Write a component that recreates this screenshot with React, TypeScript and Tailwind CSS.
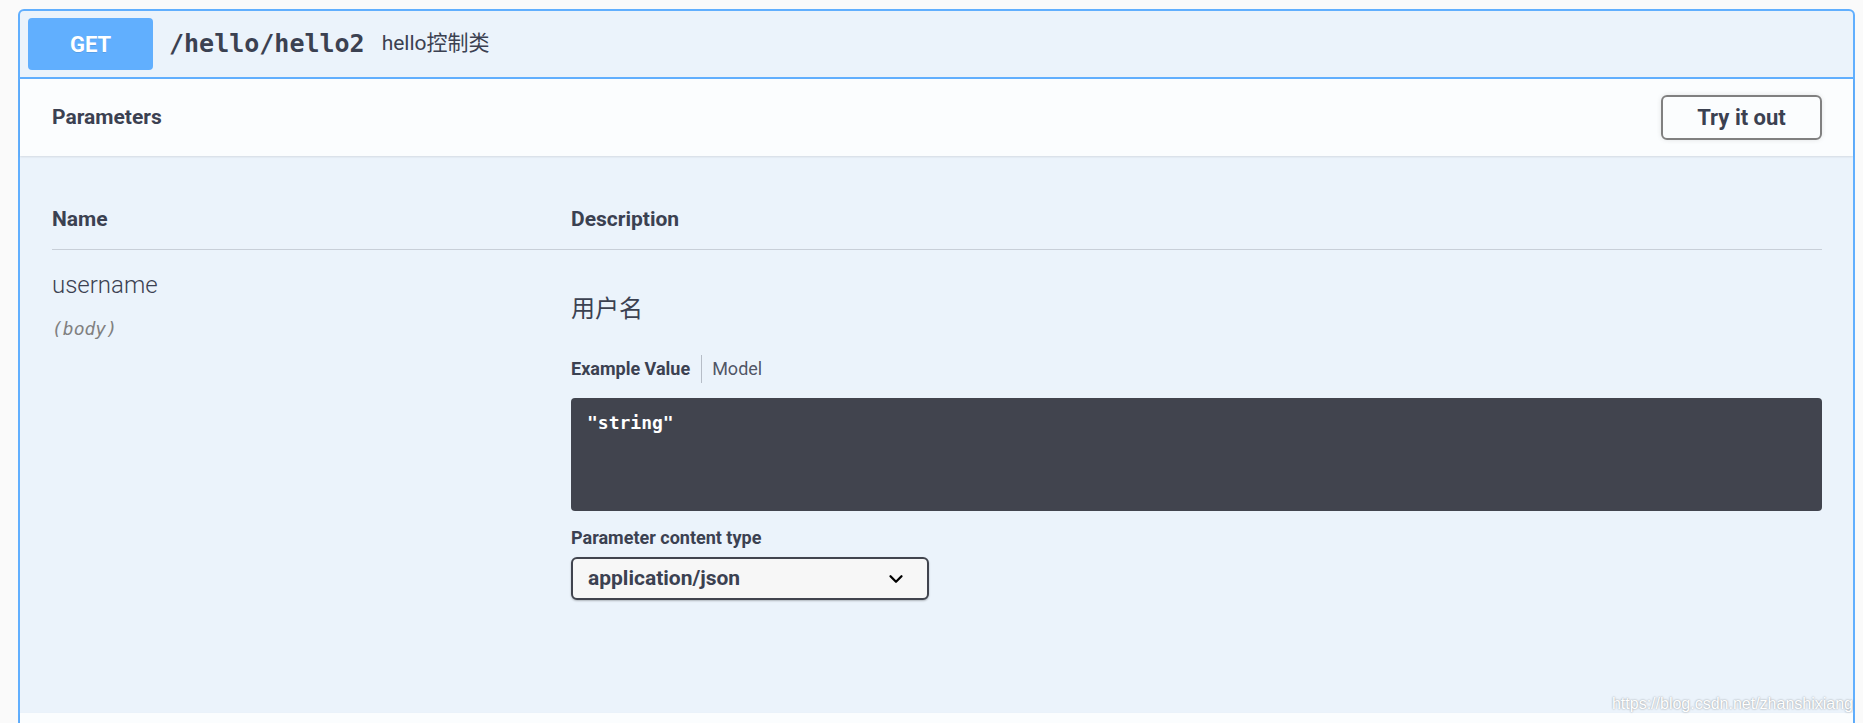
import React from 'react';
import { ChevronDown } from 'lucide-react';

const sans = "font-['Roboto','Noto_Sans_CJK_SC',sans-serif]";
const mono = "font-['DejaVu_Sans_Mono','Liberation_Mono',monospace]";

const App: React.FC = () => {
  return (
    <div className={`relative w-full h-[723px] overflow-hidden bg-[#fafafa] pt-[9px] pl-[18px] pr-[8px] ${sans} text-[#3b4151]`}>
      <div className="border-2 border-[#61affe] rounded-[6px] bg-[#ebf3fb] h-[760px] flex flex-col">
        {/* summary */}
        <div className="h-[68px] shrink-0 flex items-center px-[8px] border-b-2 border-[#61affe]">
          <div className="w-[125px] h-[52px] rounded-[4px] bg-[#61affe] text-white font-bold text-[22px] flex items-center justify-center [text-shadow:0_1px_0_rgba(0,0,0,0.1)]">
            GET
          </div>
          <span className={`ml-[16px] text-[25px] font-bold ${mono} text-[#3b4151]`}>/hello/hello2</span>
          <span className="ml-[17px] text-[21px] text-[#3b4151]">hello控制类</span>
        </div>

        {/* section header */}
        <div className="h-[77px] shrink-0 bg-white/80 shadow-[0_1px_2px_rgba(0,0,0,0.1)] flex items-center justify-between pl-[32px] pr-[31px]">
          <h4 className="text-[21px] font-bold">Parameters</h4>
          <button className="w-[161px] h-[45px] border-2 border-[#808080] rounded-[6px] text-[22px] font-bold bg-transparent shadow-[0_0_5px_rgba(0,0,0,0.1)]">
            Try it out
          </button>
        </div>

        {/* parameters table */}
        <div className="px-[32px] pr-[31px] pt-[48px] h-[557px] shrink-0">
          <div className="flex border-b border-[rgba(59,65,81,0.2)] pb-[15px]">
            <div className="w-[519px] text-[21px] leading-[30px] font-bold">Name</div>
            <div className="flex-1 text-[21px] leading-[30px] font-bold">Description</div>
          </div>
          <div className="flex">
            <div className="w-[519px] pt-[20px]">
              <div className="text-[24px] leading-[30px] font-light">username</div>
              <div className={`mt-[17px] text-[18px] leading-[24px] italic ${mono} text-[#808080]`}>(body)</div>
            </div>
            <div className="flex-1 pt-[41px]">
              <p className="text-[24px] leading-[36px]">用户名</p>
              <div className="mt-[30px] flex items-center h-[24px] text-[18px] leading-[24px]">
                <span className="font-bold pr-[11px]">Example Value</span>
                <span className="w-px h-[28px] bg-[rgba(59,65,81,0.3)]"></span>
                <span className="pl-[10px] text-[#3b4151]/90">Model</span>
              </div>
              <div className="mt-[17px] h-[113px] rounded-[4px] bg-[#41444e] pt-[13px] pl-[16px]">
                <span className={`text-white font-bold text-[18px] leading-[24px] ${mono}`}>"string"</span>
              </div>
              <div className="mt-[15px] text-[18px] leading-[24px] font-bold">Parameter content type</div>
              <div className="mt-[7px] w-[358px] h-[43px] border-2 border-[#41444e] rounded-[6px] bg-[#f7f7f7] shadow-[0_1px_2px_rgba(0,0,0,0.25)] flex items-center justify-between pl-[15px] pr-[20px]">
                <span className="text-[21px] font-bold">application/json</span>
                <ChevronDown size={22} strokeWidth={2.5} color="#000" />
              </div>
            </div>
          </div>
        </div>

        {/* next section header */}
        <div className="h-[60px] shrink-0 bg-white/80 shadow-[0_1px_2px_rgba(0,0,0,0.1)]"></div>
      </div>

      <div className="absolute right-[10px] bottom-[7px] text-[16px] text-white font-['Liberation_Sans',sans-serif] [text-shadow:0_0_2px_rgba(0,0,0,0.45)]">
        https://blog.csdn.net/zhanshixiang
      </div>
    </div>
  );
};

export default App;
